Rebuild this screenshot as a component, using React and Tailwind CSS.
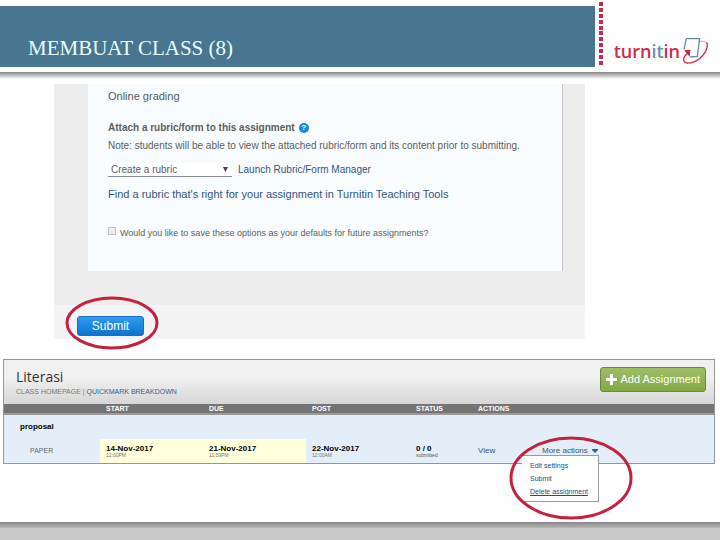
import { useState } from 'react';

const DOTS = [0, 1, 2, 3, 4, 5, 6, 7, 8, 9, 10];

const MENU_ITEMS = [
    { label: 'Edit settings', active: false },
    { label: 'Submit', active: false },
    { label: 'Delete assignment', active: true },
];

const DATES = [
    { day: '14-Nov-2017', time: '12:00PM', open: true },
    { day: '21-Nov-2017', time: '11:59PM', open: true },
    { day: '22-Nov-2017', time: '12:00AM', open: false },
];

function Logo() {
    return (
        <div className="flex items-center pt-[37px] pr-[10px]">
            <span className="font-['Open_Sans',sans-serif] text-lg leading-6 font-semibold text-[#cf2a45]">
                turn<span className="text-[#5f93a3]">it</span>in
            </span>
            <svg viewBox="0 0 90 90" className="-mt-[2px] size-[30px]" fill="none">
                <path d="M19 11 L59 11 L52 64 L30 66 M19 11 L12 43" stroke="#5f8fa3" strokeWidth="4" />
                <path d="M60 20 C70 17 77 18 80 25" stroke="#d9667a" strokeWidth="2" />
                <path d="M80 22 C84 30 82 40 75 52 C66 67 54 77 38 82 C20 88 9 82 11 70 C12 65 16 60 22 56" stroke="#cf2a45" strokeWidth="4" />
                <path d="M12 46 L31 45 L29 65 Z" fill="#cf1f3c" />
            </svg>
        </div>
    );
}

function Header() {
    return (
        <header>
            <div className="flex h-[72px] items-start">
                <div className="mt-[6px] flex h-[61px] flex-1 items-end bg-[#48758f] px-7 pb-[5px]">
                    <h1 className="font-['Liberation_Serif',serif] text-[21px] leading-7 text-[#eafffb]">MEMBUAT CLASS (8)</h1>
                </div>
                <div className="mr-[11px] ml-1 flex h-[65px] flex-col justify-between pt-[2px]">
                    {DOTS.map(dot => (
                        <span key={dot} className="size-1 bg-[#c22b4b]" />
                    ))}
                </div>
                <Logo />
            </div>
            <div className="h-[7px] bg-linear-to-b from-[#858585] to-white" />
        </header>
    );
}

function AssignmentForm() {
    return (
        <form className="mt-[5px] mr-[135px] ml-[54px] bg-[#ededed]" onSubmit={e => e.preventDefault()}>
            <div className="pr-[22px] pb-[34px] pl-[34px]">
                <div className="border-r border-[#c4c8cc] bg-[#f9fcff] px-5 pt-1 pb-[30px] text-[10px] leading-4 text-[#5c5c5c]">
                    <h2 className="text-[11px] leading-4 text-[#555a66]">Online grading</h2>
                    <div className="mt-4 flex items-center gap-1">
                        <label htmlFor="rubric" className="font-bold">Attach a rubric/form to this assignment</label>
                        <button type="button" aria-label="Help" className="flex size-[10px] items-center justify-center rounded-full bg-[#1c86d8] text-[8px] leading-none font-bold text-white">?</button>
                    </div>
                    <p className="mt-[2px] whitespace-nowrap">Note: students will be able to view the attached rubric/form and its content prior to submitting.</p>
                    <div className="mt-2 flex items-center gap-[6px]">
                        <div className="relative">
                            <select id="rubric" className="block h-[14px] w-[124px] appearance-none border-b border-[#8a8a8a] bg-white px-[3px] text-[10px] leading-3 text-[#5c5c5c]">
                                <option>Create a rubric</option>
                            </select>
                            <svg viewBox="0 0 5 5" className="pointer-events-none absolute top-1 right-1 size-[5px]" fill="#444">
                                <path d="M0 0 H5 L2.5 5 Z" />
                            </svg>
                        </div>
                        <a href="#manager" className="text-[#34557d]">Launch Rubric/Form Manager</a>
                    </div>
                    <a href="#tools" className="mt-2 block text-[11px] leading-4 whitespace-nowrap text-[#34557d]">Find a rubric that's right for your assignment in Turnitin Teaching Tools</a>
                    <label className="mt-[23px] flex items-center gap-1 text-[9px] leading-4">
                        <input type="checkbox" className="mb-1 size-2 appearance-none border border-[#c3c3c3] bg-[#ededed]" />
                        Would you like to save these options as your defaults for future assignments?
                    </label>
                </div>
            </div>
            <div className="flex bg-[#f4f4f4] px-[23px] pt-[11px] pb-[3px]">
                <div className="relative">
                    <button type="submit" className="block h-5 w-[67px] rounded-[3px] border border-[#1272c4] bg-linear-to-b from-[#2f9bee] to-[#0b74cf] text-xs leading-4 text-white">Submit</button>
                    <svg viewBox="0 0 94 54" className="pointer-events-none absolute -top-5 -left-3 h-[54px] w-[94px]" fill="none">
                        <ellipse cx="47" cy="27" rx="45" ry="25" stroke="#c5213f" strokeWidth="3" />
                    </svg>
                </div>
            </div>
        </form>
    );
}

function ActionsMenu() {
    const [open, setOpen] = useState(true);

    return (
        <div className="relative">
            <button type="button" onClick={() => setOpen(!open)} className="flex items-center gap-1 text-[8px] leading-3 whitespace-nowrap text-[#34557d]">
                More actions
                <svg viewBox="0 0 6 4" className="h-1 w-[6px]" fill="#2f5f94">
                    <path d="M0 0 H6 V1 L3 4 L0 1 Z" />
                </svg>
            </button>
            {open && (
                <ul className="absolute top-[10px] -left-5 w-[77px] border border-l-0 border-[#9b9b9b] bg-white py-[3px] pl-2 text-[7px] leading-[13px]">
                    {MENU_ITEMS.map(item => (
                        <li key={item.label}>
                            <a href="#action" className={`whitespace-nowrap text-[#26507c] ${item.active ? 'underline' : ''}`}>{item.label}</a>
                        </li>
                    ))}
                </ul>
            )}
            <svg viewBox="0 0 124 84" className="pointer-events-none absolute -top-[9px] -left-[33px] h-[84px] w-[124px]" fill="none">
                <ellipse cx="62" cy="42" rx="60" ry="40" stroke="#c5213f" strokeWidth="3" />
            </svg>
        </div>
    );
}

function ClassInbox() {
    return (
        <section className="mt-5 mr-[5px] ml-[3px] border border-[#969696]">
            <div className="flex h-11 items-start justify-between bg-linear-to-b from-[#f0f0f0] from-40% to-[#d6d6d6] pt-[7px] pr-2 pl-3">
                <div>
                    <h2 className="font-['Open_Sans',sans-serif] text-sm leading-[19px] text-[#333]">Literasi</h2>
                    <nav className="text-[7px] leading-3 whitespace-nowrap text-[#777]">
                        <a href="#home">CLASS HOMEPAGE</a> | <a href="#quickmark" className="text-[#34608f]">QUICKMARK BREAKDOWN</a>
                    </nav>
                </div>
                <button type="button" className="flex h-[25px] items-center gap-1 rounded-[3px] border border-[#6c8644] bg-linear-to-b from-[#9fbe64] to-[#82a944] px-[5px] text-[11px] whitespace-nowrap text-white">
                    <svg viewBox="0 0 11 11" className="size-[11px]" fill="white">
                        <path d="M4 0 H7 V4 H11 V7 H7 V11 H4 V7 H0 V4 H4 Z" />
                    </svg>
                    Add Assignment
                </button>
            </div>
            <table className="w-full table-fixed text-left">
                <thead className="bg-[#747474] text-[7px] leading-[9px] text-white">
                    <tr className="border-b-2 border-[#999]">
                        <th className="w-24" />
                        <th className="w-[103px] p-0 pl-[6px]">START</th>
                        <th className="w-[103px] p-0 pl-[6px]">DUE</th>
                        <th className="w-[104px] p-0 pl-[6px]">POST</th>
                        <th className="w-[62px] p-0 pl-[6px]">STATUS</th>
                        <th className="w-16 p-0 pl-[6px]">ACTIONS</th>
                        <th />
                    </tr>
                </thead>
                <tbody className="bg-[#e4eef8]">
                    <tr className="h-[25px]">
                        <th colSpan="7" className="p-0 pl-4 text-[8px] leading-3 text-black">proposal</th>
                    </tr>
                    <tr className="h-6">
                        <td className="p-0 pl-[26px] text-[7px] leading-3 text-[#666]">PAPER</td>
                        {DATES.map(date => (
                            <td key={date.day} className={`p-0 pl-[6px] ${date.open ? 'bg-[#ffffdb]' : ''}`}>
                                <div className="text-[8px] leading-2 font-bold text-black">{date.day}</div>
                                <div className="text-[5px] leading-[5px] text-[#777]">{date.time}</div>
                            </td>
                        ))}
                        <td className="p-0 pl-[6px]">
                            <div className="text-[8px] leading-2 font-bold text-black">0 / 0</div>
                            <div className="text-[5px] leading-[5px] text-[#555]">submitted</div>
                        </td>
                        <td className="p-0 pl-[6px] text-[8px] leading-3">
                            <a href="#view" className="text-[#34557d]">View</a>
                        </td>
                        <td className="p-0 pl-[6px]">
                            <ActionsMenu />
                        </td>
                    </tr>
                </tbody>
            </table>
        </section>
    );
}

export default function App() {
    return (
        <div className="flex min-h-screen flex-col bg-white font-['Liberation_Sans',sans-serif]">
            <Header />
            <main>
                <AssignmentForm />
                <ClassInbox />
            </main>
            <footer className="mt-auto h-[18px] bg-[#c8c8c8]">
                <div className="h-[6px] bg-linear-to-b from-[#858585] to-[#b8b8b8]" />
            </footer>
        </div>
    );
}
